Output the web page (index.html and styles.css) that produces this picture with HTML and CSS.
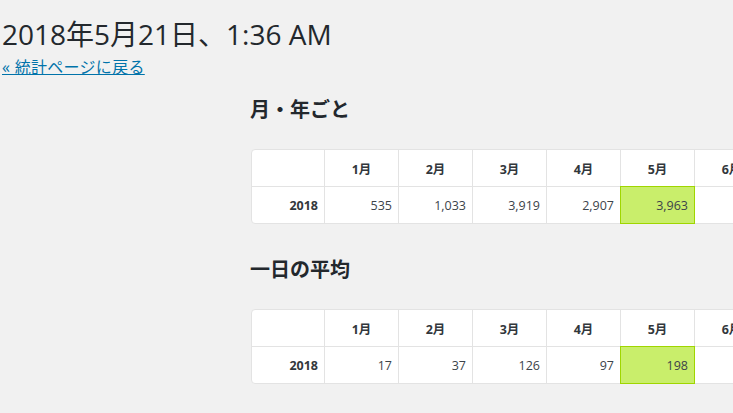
FILE: index.html
```html
<!DOCTYPE html>
<html lang="ja">
<head>
<meta charset="utf-8">
<title>統計</title>
<link rel="stylesheet" href="styles.css">
</head>
<body>
<div class="wrap">
  <h1 class="title">2018年5月21日、1:36 AM</h1>
  <a class="back" href="#">« 統計ページに戻る</a>
  <div class="content">
    <h2 class="sec-title">月・年ごと</h2>
    <table class="stats">
      <tr>
        <th class="corner"></th>
        <th>1月</th><th>2月</th><th>3月</th><th>4月</th><th>5月</th><th>6月</th>
      </tr>
      <tr>
        <th class="year">2018</th>
        <td>535</td><td>1,033</td><td>3,919</td><td>2,907</td><td class="cur">3,963</td><td></td>
      </tr>
    </table>
    <h2 class="sec-title sec-next">一日の平均</h2>
    <table class="stats">
      <tr>
        <th class="corner"></th>
        <th>1月</th><th>2月</th><th>3月</th><th>4月</th><th>5月</th><th>6月</th>
      </tr>
      <tr>
        <th class="year">2018</th>
        <td>17</td><td>37</td><td>126</td><td>97</td><td class="cur">198</td><td></td>
      </tr>
    </table>
  </div>
</div>
</body>
</html>
```
FILE: styles.css
```css
html, body {
  margin: 0;
  padding: 0;
  background: #f1f1f1;
  overflow: hidden;
}
body {
  font-family: "Open Sans", "Noto Sans CJK JP", sans-serif;
  color: #23282d;
}
.wrap {
  padding: 14px 0 0 2px;
}
.title {
  margin: 0;
  font-size: 28px;
  font-weight: 400;
  line-height: 40px;
  color: #23282d;
}
.back {
  display: inline-block;
  margin-top: 3px;
  font-size: 16px;
  line-height: 20px;
  letter-spacing: 0.3px;
  color: #0073aa;
  text-decoration: underline;
}
.content {
  padding-left: 248px;
}
.sec-title {
  margin: 19px 0 26px;
  font-size: 20px;
  line-height: 26px;
  font-weight: 700;
  color: #23282d;
}
.sec-title.sec-next {
  margin-top: 33px;
}
.stats {
  border-collapse: separate;
  border-spacing: 0;
  table-layout: fixed;
  border: 1px solid #e3e3e3;
  border-radius: 4px;
  background: #fff;
  width: 519px;
  margin-left: 1px;
}
.stats th, .stats td {
  box-sizing: border-box;
  width: 74px;
  font-size: 12.5px;
  border-right: 1px solid #e3e3e3;
  padding: 0 6px;
  color: #444;
}
.stats tr:first-child th {
  height: 37px;
  border-bottom: 1px solid #e3e3e3;
  text-align: center;
  font-weight: 700;
  color: #32373c;
}
.stats tr:first-child th.corner {
  width: 73px;
}
.stats tr + tr th, .stats tr + tr td {
  height: 36px;
}
.stats th.year {
  text-align: right;
  font-weight: 700;
  color: #32373c;
  width: 73px;
}
.stats td {
  text-align: right;
  color: #3c434a;
}
.stats td.cur {
  position: relative;
  background: #c9ee6b;
}
.stats td.cur::after {
  content: "";
  position: absolute;
  left: -1px;
  right: -1px;
  top: -1px;
  bottom: -1px;
  border: 1px solid #9fd600;
}
```
